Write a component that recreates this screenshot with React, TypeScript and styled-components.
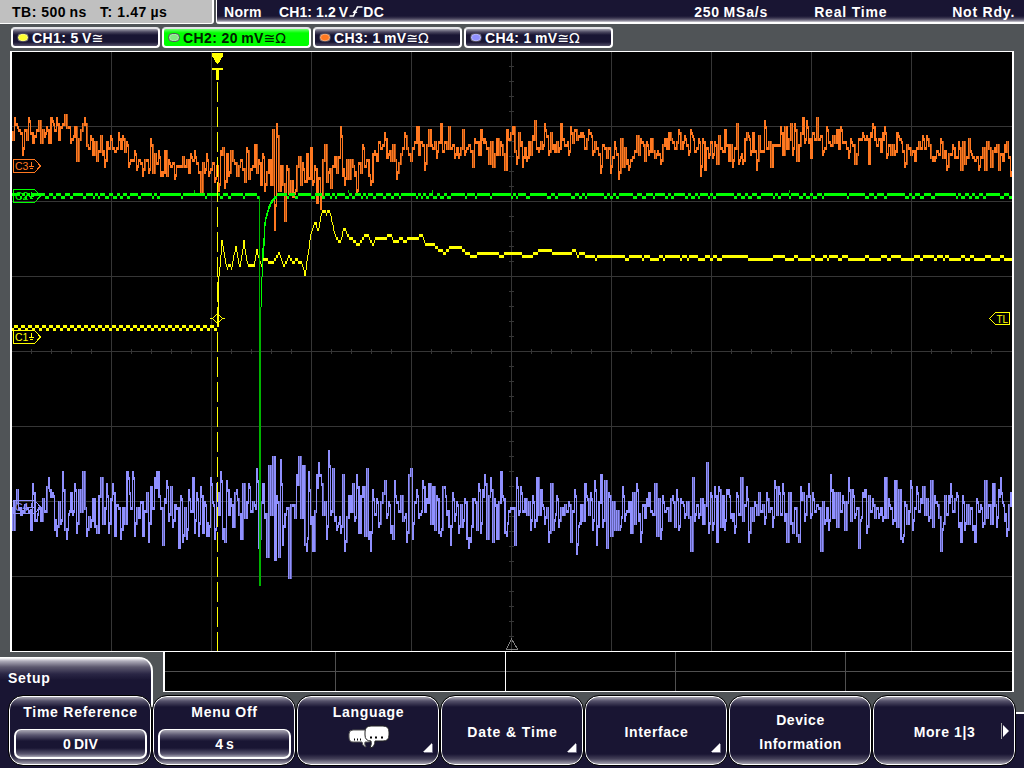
import React from 'react';
import styled, { createGlobalStyle } from 'styled-components';

const NAVY = '#191533';
const GREY = '#505457';

const GlobalStyle = createGlobalStyle`
  * { box-sizing: border-box; }
  body { margin: 0; background: ${GREY}; overflow: hidden; }
`;

const Screen = styled.div`
  width: 1024px;
  height: 768px;
  display: flex;
  flex-direction: column;
  background: ${GREY};
  color: #fff;
  font: bold 14px/16px 'Liberation Sans', Arial, sans-serif;
  overflow: hidden;
`;

const TopBar = styled.header`
  display: flex;
  gap: 2px;
  height: 24px;
  flex: none;
`;

const TimeBase = styled.div`
  width: 214px;
  padding: 4px 0 0 12px;
  display: flex;
  background: #c0c0c0;
  color: #000;
  border-right: 2px solid #fff;
  border-bottom: 1px solid #fff;
  border-bottom-right-radius: 3px;
`;

const Status = styled.div`
  flex: 1;
  display: flex;
  padding: 4px 0 0 7px;
  background: linear-gradient(${NAVY} 0 16px, #38334e 18px, #6c687c 20px, #d0ced6 22px, #fff 22px);
  border-left: 1px solid #fff;
  border-bottom-left-radius: 3px;
`;

const Label = styled.span<{ $w?: number; $ls?: number }>`
  flex: none;
  white-space: pre;
  width: ${p => (p.$w ? `${p.$w}px` : 'auto')};
  letter-spacing: ${p => p.$ls ?? 0}px;
`;

const Channels = styled.div`
  display: flex;
  gap: 2px;
  height: 27px;
  padding: 3px 0 3px 11px;
  flex: none;
`;

const Chip = styled.div<{ $active?: boolean }>`
  width: 149px;
  height: 21px;
  display: flex;
  align-items: center;
  padding-left: 4px;
  border: 2px solid #fff;
  border-top-color: #e4e4e8;
  border-radius: 4px;
  color: ${p => (p.$active ? '#002000' : '#fff')};
  background: ${p =>
    p.$active
      ? 'linear-gradient(#70ff70, #00ff00 4px, #00ff00)'
      : `linear-gradient(#a09eac, #4c4860 3px, ${NAVY} 6px, ${NAVY} 13px, #55516a)`};
`;

const Led = styled.i<{ $color: string }>`
  width: 12px;
  height: 9px;
  margin-right: 3px;
  border-radius: 5px;
  border: 1px solid #55515f;
  background: radial-gradient(ellipse, ${p => p.$color} 45%, #eee 100%);
`;

const Unit = styled.span`
  font: 14px/16px 'DejaVu Sans', sans-serif;
  letter-spacing: -0.2px;
`;

const Display = styled.main`
  width: 1004px;
  height: 601px;
  margin-left: 10px;
  flex: none;
  background: #000;
  border: 1px solid #fff;
  border-width: 1px 2px;
`;

const Drawing = styled.svg`
  display: block;
`;

const Lower = styled.div`
  display: flex;
  height: 43px;
  flex: none;
`;

const Tab = styled.div`
  width: 153px;
  height: 54px;
  margin-top: 5px;
  padding: 12px 0 0 8px;
  border-right: 2px solid #fff;
  border-top: 1px solid #fff;
  border-top-right-radius: 14px;
  background: linear-gradient(#fff, #b0aebb 3px, #5c586e 9px, #2a2645 16px, ${NAVY} 22px);
`;

const Overview = styled.div`
  width: 851px;
  height: 40px;
  margin-left: 10px;
  background: #000;
  border: 2px solid #fff;
  border-top: 0;
  border-bottom-width: 1px;
`;

const Menu = styled.nav`
  display: flex;
  height: 73px;
  padding: 0 0 0 8px;
  position: relative;
  flex: none;
  background:
    linear-gradient(${NAVY}, ${NAVY}) 0 0 / 151px 73px no-repeat,
    linear-gradient(#fff, #fff) 151px 0 / 2px 12px no-repeat,
    linear-gradient(${GREY} 0 17px, #fff 17px 19px, ${NAVY} 19px);
`;

const SoftKey = styled.button`
  position: relative;
  width: 144px;
  height: 71px;
  padding: 8px 3px 0 4px;
  border: 1px solid #000;
  border-radius: 15px;
  box-shadow: inset 0 0 0 1px #fff;
  background: linear-gradient(#aaa8b4 1px, #55516a 5px, ${NAVY} 11px, ${NAVY} 58px, #45415a 63px, #b5b3be 69px);
  color: #fff;
  font: inherit;
  display: flex;
  flex-direction: column;
  align-items: center;
`;

const Plain = styled.div`
  flex: 1;
  display: flex;
  flex-direction: column;
  align-items: center;
  justify-content: center;
  padding-bottom: 6px;
  gap: 8px;
`;

const Value = styled.div`
  width: 133px;
  height: 30px;
  margin-top: 9px;
  display: flex;
  align-items: center;
  justify-content: center;
  border: 2px solid #fff;
  border-top-width: 1px;
  border-radius: 7px;
  background: linear-gradient(#aaa8b4, #5a5670 5px, ${NAVY} 11px, ${NAVY} 18px, #5a5670 24px, #a8a6b4);
`;

const Bubbles = styled.svg`
  margin-top: 1px;
`;

const Corner = styled.svg`
  position: absolute;
  right: 6px;
  bottom: 12px;
`;

const MoreArrow = styled.svg`
  position: absolute;
  right: 5px;
  top: 26px;
`;

type P = [number, number];

const parse = (s: string): P[] =>
  s.trim().split(/\s+/).map(t => t.split(',').map(Number) as P);

const random = (seed: number) => () => {
  seed = (seed * 1664525 + 1013904223) >>> 0;
  return seed / 4294967296;
};

const interpolate = (pts: P[], x: number) => {
  for (let i = 1; i < pts.length; i++) {
    if (x <= pts[i][0]) {
      const [a, b] = pts[i - 1];
      const [c, d] = pts[i];
      return b + ((d - b) * (x - a)) / (c - a || 1);
    }
  }
  return pts[pts.length - 1][1];
};

const ORANGE_MID = parse('12,131 28,130 60,129 83,130 88,143 100,149 125,146 132,160 160,163 200,166 245,165 272,168 290,178 318,175 335,160 350,168 370,162 378,145 392,150 398,165 403,146 420,142 440,146 470,145 500,150 512,135 530,143 560,142 575,134 590,144 620,158 650,148 680,144 720,149 750,147 775,142 790,138 815,134 830,142 870,141 900,149 925,145 945,155 975,157 1012,157');
const ORANGE_PEAKS = parse('15,118 22,153 28,118 40,140 51,118 56,118 64,115 70,142 76,160 85,118 97,160 105,165 110,136 122,136 130,160 143,174 150,139 163,174 165,150 175,178 191,152 201,192 207,154 219,190 225,187 230,151 245,180 255,145 261,183 273,130 275,229 277,124 284,220 310,148 317,200 320,207 325,145 331,187 340,127 345,183 356,192 362,145 370,183 385,133 397,178 404,133 416,127 424,168 440,124 448,127 459,156 463,130 473,165 480,130 492,165 504,169 513,125 516,162 523,165 527,160 534,121 544,124 559,150 561,124 568,154 575,130 589,130 601,171 611,171 619,177 621,139 629,169 636,136 651,139 660,163 679,130 693,134 701,174 705,169 724,130 732,165 736,124 742,163 752,131 756,168 764,121 770,165 785,127 791,124 796,160 802,118 810,155 816,118 822,154 833,134 840,127 848,157 854,163 862,131 868,162 872,124 880,151 885,127 897,133 904,165 914,160 923,136 933,159 941,139 946,168 958,142 961,168 968,139 978,168 990,166 995,147 1004,145 1010,174');
const ORANGE_AMP = parse('12,13 88,11 130,13 260,17 272,38 300,32 318,20 350,14 380,11 460,12 1012,14');

const BLUE_MID = parse('12,507 1012,509');
const BLUE_AMP = parse('12,16 40,22 60,32 250,34 262,46 300,44 340,36 380,30 1012,30');
const BLUE_PEAKS = parse('13,528 17,490 31,528 37,520 49,478 57,535 67,538 75,484 83,472 87,534 97,531 107,484 109,532 121,537 129,478 133,472 143,535 149,541 155,478 157,472 163,544 167,481 179,547 187,538 189,490 201,487 209,534 217,482 225,541 227,481 237,490 241,538 249,484 257,469 259,547 267,556 269,466 273,457 275,559 279,556 281,460 289,577 297,475 299,457 303,464 305,544 307,549 313,549 320,541 329,451 332,469 321,475 343,475 340,532 352,484 358,532 370,549 363,487 385,481 392,538 395,481 406,541 409,475 411,469 413,538 429,484 439,532 444,487 450,544 453,491 467,537 469,547 485,475 487,538 491,478 497,538 515,543 537,478 548,540 570,540 576,552 600,475 607,546 641,540 655,484 690,550 707,463 716,540 740,478 749,541 775,480 786,541 808,482 820,548 849,478 858,545 885,478 902,540 930,480 940,549 951,482 975,541 985,480 1001,478 1007,535');

// Noisy traces are drawn column by column, two columns to a sample.
function noisy(mid: P[], amp: P[], peaks: P[], seed: number, flip: number, tail: number) {
  const rnd = random(seed);
  const fixed = new Map(peaks.map(([x, y]) => [Math.floor(x / 2), y]));
  let bright = '';
  let dim = '';
  let prev = interpolate(mid, 12);
  for (let x = 12; x < 1012; x += 2) {
    const centre = interpolate(mid, x);
    let noise = (rnd() + rnd() - 1) * 1.35;
    if (rnd() < flip) noise = Math.abs(noise) * (prev > centre ? -1 : 1);
    const raw = fixed.get(x / 2) ?? centre + noise * interpolate(amp, x);
    const y = Math.round(raw / 3) * 3;
    const top = Math.min(prev, y);
    const h = Math.abs(prev - y) + 3;
    bright += `M${x + 0.5} ${top}v${h}`;
    const kind = rnd();
    if (h > 6 && kind < 0.35) dim += `M${x + 1.5} ${top}v${h}`;
    else if (h > 6 && kind < 0.5) bright += `M${x + 1.5} ${top}v${h}`;
    else {
      // a short tail that turns back towards the centre line
      const back = Math.round(((centre - y) * tail * (0.5 + rnd())) / 3) * 3;
      bright += `M${x + 1.5} ${Math.min(y, y + back)}v${Math.abs(back) + 3}`;
      prev = y + back;
      continue;
    }
    prev = y;
  }
  return { bright, dim };
}

const YELLOW = parse('217,327 218,278 219,268 221,242 222,246 225,264 226,269 229,265 231,269 232,262 235,247 237,260 239,269 241,256 243,242 244,250 246,262 248,266 251,264 253,267 256,251 258,260 261,266 264,258 268,262 271,264 274,260 278,254 282,266 285,263 288,257 292,262 296,260 300,262 302,268 304,276 305,270 308,250 309,240 312,228 315,223 317,233 321,213 323,211 326,214 328,211 332,225 334,236 337,241 340,241 343,230 347,236 351,240 358,244 360,240 366,235 372,244 375,238 385,239 388,236 393,241 400,238 410,239 415,236 421,236 424,244 433,244 437,250 444,252 450,248 456,247 460,248 465,253 500,254 510,252 530,256 545,250 555,254 568,252 580,254 595,257 630,257 665,256 680,257.5 1012,257.8');

function yellowTrace() {
  const rnd = random(77);
  let d = '';
  for (let x = 12; x < 217; x++) {
    const high = x % 7 < 4;
    d += `M${x + 0.5} ${high ? 325 : 328}v3`;
  }
  let prev = 325;
  let jitter = 0;
  let run = 0;
  for (let x = 217; x < 1012; x++) {
    if (run-- <= 0) {
      jitter = (rnd() - 0.5) * (x > 340 ? 3.4 : 1);
      run = 1 + rnd() * 3;
    }
    const y = Math.round((interpolate(YELLOW, x) + jitter - 1) / 3) * 3 + 1;
    d += `M${x + 0.5} ${Math.min(prev, y) - 1}v${Math.max(3, Math.abs(prev - y))}`;
    prev = y;
  }
  return d;
}

function greenTrace() {
  const rnd = random(31);
  let d = '';
  let low = 0;
  let run = 8;
  for (let x = 12; x < 1012; x++) {
    if (run-- <= 0) {
      low = low ? 0 : 1;
      run = low ? rnd() * 3 : 1 + rnd() * rnd() * rnd() * 36;
    }
    if (x < 259 || x > 274) d += `M${x + 0.5} ${193 + low * 3}v3`;
  }
  return d;
}

const orange = noisy(ORANGE_MID, ORANGE_AMP, ORANGE_PEAKS, 12, 0.35, 0.3);
const blue = noisy(BLUE_MID, BLUE_AMP, BLUE_PEAKS, 91, 0.6, 0.35);
const yellow = yellowTrace();
const green = greenTrace();

const range = (n: number) => Array.from({ length: n }, (_, i) => i);
const grid =
  range(9).map(i => `M${111.5 + i * 100} 52v599`).join('') +
  range(7).map(i => `M12 ${126.5 + i * 75}h1000`).join('') +
  range(49).map(i => `M${31.5 + i * 20} 349v5`).join('') +
  range(39).map(i => `M509 ${66.5 + i * 15}h5`).join('');

function Marker({ y, color, name }: { y: number; color: string; name: string }) {
  return (
    <g fill="none" stroke={color}>
      <path d={`M13.5 ${y - 6.5}h21l6 6.5l-6 6.5h-21z`} />
      <text x="15" y={y + 4} fill={color} stroke="none" fontSize="10.5" fontWeight="400" fontFamily="Liberation Sans, sans-serif">{name}</text>
      <path d={`M31.5 ${y - 4}v5M29 ${y + 0.5}h5M30 ${y + 2.5}h3`} />
    </g>
  );
}

function Waveforms() {
  return (
    <Drawing width="1000" height="599" viewBox="12 52 1000 599" shapeRendering="crispEdges">
      <path d={grid} stroke="#363636" />
      <path d="M511.5 639l-5 10h11z" fill="none" stroke="#808080" />
      <path d={blue.dim} stroke="#6464b4" />
      <path d={blue.bright} stroke="#9090ff" />
      <Marker y={507} color="#9090f8" name="C4" />
      <Marker y={166} color="#ff7820" name="C3" />
      <path d={orange.dim} stroke="#b45414" />
      <path d={orange.bright} stroke="#ff7820" />
      <path d={yellow} stroke="#ffff00" />
      <Marker y={337} color="#ffff00" name="C1" />
      <path d={green} stroke="#00ff00" />
      <path d="M194.5 190v3M348.5 190v3M432.5 190v3M789.5 190v3" stroke="#00c000" />
      <Marker y={196} color="#00ff00" name="C2" />
      <path d="M259.5 196v111M259.5 307v279M260.5 307v279" stroke="#00b400" />
      <path d="M261.5 277v30M262.5 248v29M263.5 238v20M264.5 222v24M265.5 217v9M266.5 213v6M267.5 210v6M268.5 206v6M269.5 204v5M270.5 202v5M271.5 200v4M272.5 199v4M273.5 198v3M274.5 196v4" stroke="#00ff00" />
      <path d="M217.5 82V651" stroke="#ffff00" strokeDasharray="20 5" />
      <path d="M212 53h11v3l-5 8h-1l-5-8zM212 68h11v2h-4v10h-3V70h-4z" fill="#ffff00" />
      <path d="M217.5 313.5l5 5l-5 5l-5-5zM210 318.5h3M222 318.5h3" fill="none" stroke="#ffff00" />
      <path d="M989.5 318.5l6-6h14v12h-14z" fill="none" stroke="#ffff00" />
      <text x="996.5" y="322.5" fill="#ffff00" fontSize="10" fontWeight="400" fontFamily="Liberation Sans, sans-serif">TL</text>
    </Drawing>
  );
}

function Channel({ name, scale, color, ohm, active }: { name: string; scale: string; color: string; ohm?: boolean; active?: boolean }) {
  return (
    <Chip $active={active}>
      <Led $color={color} />
      <Label $ls={0.4}>{`${name}: ${scale}`}</Label>
      <Unit>{ohm ? '≅Ω' : '≅'}</Unit>
    </Chip>
  );
}

const Submenu = () => (
  <Corner width="10" height="10" viewBox="0 0 10 10">
    <path d="M9 0v9H0z" fill="#fff" />
    <path d="M1 9.5h8.5V1" fill="none" stroke="#77748a" />
  </Corner>
);

export default function App() {
  return (
    <Screen>
      <GlobalStyle />
      <TopBar>
        <TimeBase>
          <Label $w={88} $ls={0.5}>{'TB: 500\u2009ns'}</Label>
          <Label $ls={0.6}>{'T: 1.47\u2009µs'}</Label>
        </TimeBase>
        <Status>
          <Label $w={55} $ls={0.3}>Norm</Label>
          <Label $ls={0.1}>{'CH1: 1.2\u2009V'}</Label>
          <svg width="15" height="14" viewBox="0 0 14 14">
            <path d="M1 12h4L9 3h5" fill="none" stroke="#fff" strokeWidth="1.6" />
            <path d="M4 9l2-3l3 3z" fill="#fff" />
          </svg>
          <Label $w={331} $ls={0.5}>DC</Label>
          <Label $w={120} $ls={0.8}>{'250\u2009MSa/s'}</Label>
          <Label $w={138} $ls={0.8}>Real Time</Label>
          <Label $ls={0.8}>Not Rdy.</Label>
        </Status>
      </TopBar>
      <Channels>
        <Channel name="CH1" scale={'5\u2009V'} color="#ffff30" />
        <Channel name="CH2" scale={'20\u2009mV'} color="#80e880" ohm active />
        <Channel name="CH3" scale={'1\u2009mV'} color="#ff7820" ohm />
        <Channel name="CH4" scale={'1\u2009mV'} color="#9090ff" ohm />
      </Channels>
      <Display>
        <Waveforms />
      </Display>
      <Lower>
        <Tab><Label $ls={0.7}>Setup</Label></Tab>
        <Overview>
          <Drawing width="847" height="39" shapeRendering="crispEdges">
            <path d="M0 19.5h847M170.5 0v39M510.5 0v39M680.5 0v39" stroke="#505050" />
            <path d="M340.5 0v39" stroke="#fff" />
          </Drawing>
        </Overview>
      </Lower>
      <Menu>
        <SoftKey>
          <Label $ls={0.75}>Time Reference</Label>
          <Value><Label $ls={0.2}>{'0\u2009DIV'}</Label></Value>
        </SoftKey>
        <SoftKey>
          <Label $ls={0.7}>Menu Off</Label>
          <Value><Label>{'4\u2009s'}</Label></Value>
        </SoftKey>
        <SoftKey>
          <Label $ls={0.7}>Language</Label>
          <Bubbles width="44" height="28" viewBox="0 0 44 28">
            <path d="M6 9h15q4 0 4 4v3q0 5-4 5h-3q-1 2 1 5q-4-1-4-5H6q-4 0-4-5v-3q0-4 4-4z" fill="#fff" stroke="#555" />
            <path d="M24 5h12q6 0 6 6v3q0 6-6 6H28q0 6-5 7q2-4 1-7q-6 0-6-6v-3q0-6 6-6z" fill="#fff" stroke="#222" />
            <path d="M7 18.5h1M10 18.5h1M13 18.5h1M23 16.5h2M28 16.5h2M34 16.5h2" stroke="#000" strokeWidth="2" />
          </Bubbles>
          <Submenu />
        </SoftKey>
        <SoftKey>
          <Plain><Label $ls={0.9}>{'Date & Time'}</Label></Plain>
          <Submenu />
        </SoftKey>
        <SoftKey>
          <Plain><Label $ls={0.6}>Interface</Label></Plain>
          <Submenu />
        </SoftKey>
        <SoftKey>
          <Plain>
            <Label $ls={0.6}>Device</Label>
            <Label $ls={0.5}>Information</Label>
          </Plain>
        </SoftKey>
        <SoftKey>
          <Plain><Label $ls={0.6}>More 1|3</Label></Plain>
          <MoreArrow width="10" height="18" viewBox="0 0 10 18">
            <path d="M1.5 1v16" stroke="#aaa" />
            <path d="M3 3l6 6l-6 6z" fill="#fff" />
          </MoreArrow>
        </SoftKey>
      </Menu>
    </Screen>
  );
}
